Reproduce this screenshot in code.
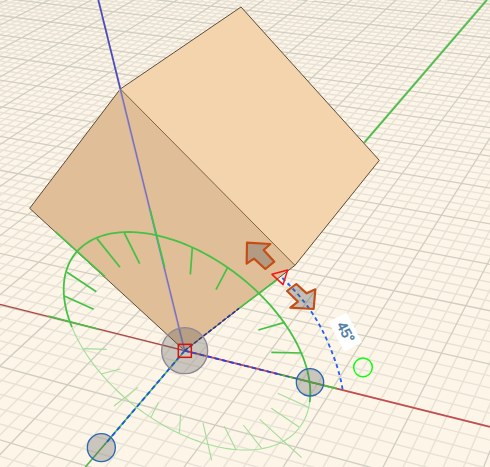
const WIDTH = 490;
const HEIGHT = 467;

// Perspective projection of the ground plane; one unit is one major grid cell.
function project(u, v) {
  const w = 1 - 0.0266 * u + 0.0665 * v;
  return [(185 + 65.2 * u + 55 * v) / w, (351 + 8 * u - 26.5 * v) / w];
}

function planeLine(u1, v1, u2, v2) {
  const [x1, y1] = project(u1, v1);
  const [x2, y2] = project(u2, v2);
  return `M${x1.toFixed(2)} ${y1.toFixed(2)}L${x2.toFixed(2)} ${y2.toFixed(2)}`;
}

const U_RANGE = [-14, 8];
const V_RANGE = [-5, 16];
const SUBDIVISIONS = 5;

function gridPath(major) {
  const parts = [];
  for (let i = U_RANGE[0] * SUBDIVISIONS; i <= U_RANGE[1] * SUBDIVISIONS; i++) {
    if ((i % SUBDIVISIONS === 0) === major) {
      parts.push(planeLine(i / SUBDIVISIONS, V_RANGE[0], i / SUBDIVISIONS, V_RANGE[1]));
    }
  }
  for (let i = V_RANGE[0] * SUBDIVISIONS; i <= V_RANGE[1] * SUBDIVISIONS; i++) {
    if ((i % SUBDIVISIONS === 0) === major) {
      parts.push(planeLine(U_RANGE[0], i / SUBDIVISIONS, U_RANGE[1], i / SUBDIVISIONS));
    }
  }
  return parts.join("");
}

// Part of the rotation ring between two parameter angles.
function ringPath(from, to) {
  const steps = 90;
  const points = [];
  for (let i = 0; i <= steps; i++) {
    const t = from + ((to - from) * i) / steps;
    const x = 187 + 123.3 * Math.cos(t);
    const y = 341 + 109 * (0.475 * Math.cos(t) + 0.88 * Math.sin(t));
    points.push(`${x.toFixed(2)} ${y.toFixed(2)}`);
  }
  return `M${points.join("L")}`;
}

const FRONT_TICKS =
  "M166 695L315 830M201 817L289 875M193 888L281 928M145 948L293 987M291 716L360 802M373 699L419 791M450 628L494 802M577 742L571 823M683 802L648 869M830 840L717 925M854 967L775 990M907 1059L814 1057M833 1122L1010 1166";

const BACK_TICKS =
  "M924 1221L833 1180M897 1281L814 1225M905 1373L779 1258M785 1345L730 1275M708 1349L673 1279M635 1381L609 1269M538 1300L542 1242M453 1252L476 1207M342 1218L414 1162M303 1122L361 1107M250 1046L320 1048";

function Ground() {
  return (
    <g fill="none">
      <path d={gridPath(false)} stroke="#e8e2d6" strokeWidth="1.4" />
      <path d={gridPath(true)} stroke="#d0cec1" strokeWidth="1.3" />
    </g>
  );
}

function Cube() {
  return (
    <g>
      <polygon points="723,21 361,267 885,796 1138,481" fill="#f4d4ac" />
      <polygon points="361,267 89,625 554,1052 885,796" fill="#e0be98" />
      <path
        d="M361 267L885 796"
        fill="none"
        stroke="#7c6040"
        strokeWidth="3"
      />
      <path
        d="M361 267L723 21L1138 481L885 796L554 1052L89 625Z"
        fill="none"
        stroke="#5b4a38"
        strokeWidth="3"
      />
    </g>
  );
}

function Axes() {
  return (
    <g fill="none">
      <path d="M0 913L554 1052" stroke="#b04545" strokeWidth="3.6" />
      <path d="M554 1052L1470 1281" stroke="#c44c4c" strokeWidth="5.4" />
      <path d="M1461 0L1093 428" stroke="#4cbf4c" strokeWidth="5.6" />
      <path d="M554 1052L256 1401" stroke="#4bb84b" strokeWidth="4.4" />
      <path d="M295 0L361 267" stroke="#4c4cb8" strokeWidth="5.4" />
    </g>
  );
}

function RotationRing() {
  return (
    <g fill="none">
      <path d={ringPath(-0.05, 2.774)} stroke="#a3dd9a" strokeWidth="1.1" />
      <path d={ringPath(0.1, -3.509)} stroke="#45c245" strokeWidth="1.8" />
      <g transform="scale(0.33333)">
        <path d={BACK_TICKS} stroke="#a3dd9a" strokeWidth="3.3" />
        <path d={FRONT_TICKS} stroke="#45c245" strokeWidth="5.2" />
      </g>
    </g>
  );
}

function Handles() {
  return (
    <g>
      <g fill="#5a5a5a" fillOpacity="0.3" strokeWidth="4">
        <circle cx="554" cy="1052" r="69" stroke="#8c8894" />
        <circle cx="930" cy="1147" r="41" stroke="#2a68b0" />
        <circle cx="304" cy="1343" r="42" stroke="#2a68b0" />
      </g>
      <rect x="535" y="1033" width="39" height="39" fill="none" stroke="#d81010" strokeWidth="4.5" />
      <circle cx="1089" cy="1102" r="28" fill="none" stroke="#12ff12" strokeWidth="4.5" />
      <polygon
        points="816,823 863,810 849,854"
        fill="none"
        stroke="#f21818"
        strokeWidth="4.5"
        strokeLinejoin="round"
      />
      <g
        fill="#555555"
        fillOpacity="0.33"
        stroke="#c44d16"
        strokeWidth="6.5"
        strokeLinejoin="round"
      >
        <polygon points="741,728 811,732 791,750 823,785 796,807 762,776 740,791" />
        <polygon points="861,873 889,852 920,880 946,868 941,927 871,923 894,905" />
      </g>
    </g>
  );
}

export default function App() {
  return (
    <main className="w-full bg-[#fcf5e8]">
      <svg
        viewBox={`0 0 ${WIDTH} ${HEIGHT}`}
        className="block h-auto w-full"
        role="img"
        aria-label="Cube rotated by 45°"
      >
        <Ground />
        <g transform="scale(0.33333)">
          <Axes />
          <Cube />
          <path d="M358 267L551 1052" stroke="#b9b4de" strokeWidth="3" />
          <path d="M361 267L554 1052" stroke="#8070ac" strokeWidth="4.5" />
        </g>
        <RotationRing />
        <g transform="scale(0.33333)" fill="none">
          <path d="M554 1052L315 1333" stroke="#155af0" strokeWidth="5.5" strokeDasharray="14 9" />
          <path d="M554 1052L833 1122" stroke="#2c40e4" strokeWidth="5.5" strokeDasharray="14 9" />
          <path d="M833 1122L890 1136" stroke="#2c50c4" strokeWidth="3" strokeDasharray="14 9" />
          <path d="M554 1052L717 925" stroke="#23348e" strokeWidth="5" strokeDasharray="12 6" />
          <path
            d="M847 834C920 905 955 960 985 1030C1008 1083 1022 1130 1028 1170"
            stroke="#2460f4"
            strokeWidth="5.5"
            strokeDasharray="12 10"
          />
          <polygon points="985,965 1040,938 1086,1027 1033,1055" fill="#ffffff" />
          <Handles />
        </g>
        <text
          transform="translate(346 332) rotate(62)"
          textAnchor="middle"
          dominantBaseline="central"
          fill="#4a7aa4"
          stroke="#4a7aa4"
          strokeWidth="0.5"
          className="font-['Liberation_Sans',sans-serif] text-[14px]"
        >
          45°
        </text>
      </svg>
    </main>
  );
}
